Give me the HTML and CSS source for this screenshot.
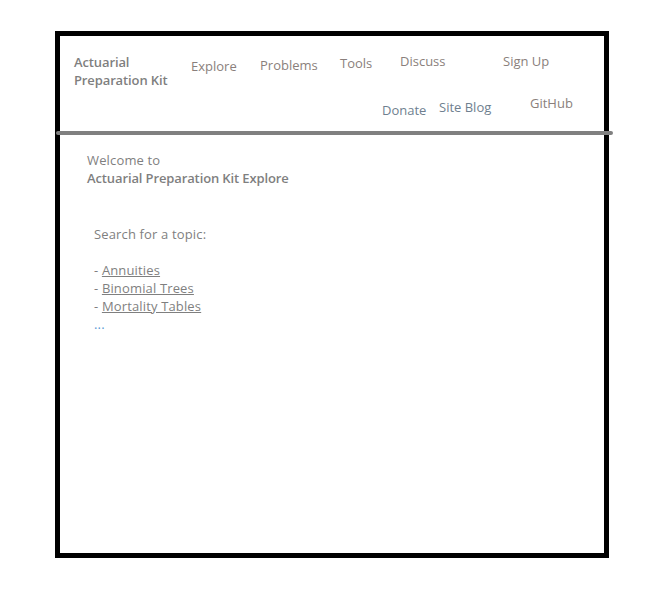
FILE: index.html
```html
<!DOCTYPE html>
<html>
<head>
<meta charset="utf-8">
<title>Actuarial Preparation Kit Explore</title>
<link rel="stylesheet" href="styles.css">
</head>
<body>
<div class="frame">
  <header class="header">
    <div class="row row-top">
      <div class="brand">Actuarial<br>Preparation Kit</div>
      <a class="nav nav-explore">Explore</a>
      <a class="nav nav-problems">Problems</a>
      <a class="nav nav-tools">Tools</a>
      <a class="nav nav-discuss">Discuss</a>
      <a class="nav nav-signup">Sign Up</a>
    </div>
    <div class="row row-bottom">
      <a class="nav nav-donate">Donate</a>
      <a class="nav nav-blog">Site Blog</a>
      <a class="nav nav-github">GitHub</a>
    </div>
  </header>
  <div class="rule"></div>
  <main class="content">
    <p class="welcome">Welcome to<br><strong>Actuarial Preparation Kit Explore</strong></p>
    <div class="search">
      <p class="search-label">Search for a topic:</p>
      <ul class="topics">
        <li>- <a class="topic">Annuities</a></li>
        <li>- <a class="topic">Binomial Trees</a></li>
        <li>- <a class="topic">Mortality Tables</a></li>
        <li class="more">...</li>
      </ul>
    </div>
  </main>
</div>
</body>
</html>
```
FILE: styles.css
```css
html, body {
  margin: 0;
  padding: 0;
  background: #ffffff;
}
body {
  font-family: "Open Sans", "Noto Sans", sans-serif;
  font-size: 13px;
  line-height: 18px;
  color: #7f7f7f;
}
.frame {
  box-sizing: border-box;
  margin: 31px 0 0 55px;
  width: 554px;
  height: 527px;
  border: 5px solid #000000;
  display: flex;
  flex-direction: column;
}
.header {
  height: 95px;
  padding-left: 14px;
  display: flex;
  flex-direction: column;
}
.row {
  display: flex;
  align-items: flex-start;
}
.brand {
  width: 117px;
  margin-top: 17px;
  font-weight: 600;
  letter-spacing: -0.12px;
  color: #7f7f7f;
  flex: none;
}
.nav {
  flex: none;
  white-space: nowrap;
  color: #8a7f7c;
}
.nav-explore { width: 69px; margin-top: 21px; }
.nav-problems { width: 80px; margin-top: 20px; }
.nav-tools { width: 60px; margin-top: 18px; }
.nav-discuss { width: 103px; margin-top: 16px; }
.nav-signup { margin-top: 16px; }
.row-bottom {
  padding-left: 308px;
}
.nav-donate { width: 57px; margin-top: 12px; color: #6f7f8f; }
.nav-blog { width: 91px; margin-top: 9px; color: #6f7f8f; }
.nav-github { margin-top: 5px; }
.rule {
  height: 4px;
  margin: 0 -9px 0 -4px;
  background: #808080;
  border-radius: 2px;
}
.content {
  padding: 16px 0 0 27px;
  letter-spacing: 0.15px;
}
.welcome {
  margin: 0;
}
.welcome strong {
  font-weight: 600;
  letter-spacing: -0.12px;
}
.search {
  margin: 38px 0 0 7px;
}
.search-label {
  margin: 0 0 18px 0;
}
.topics {
  list-style: none;
  margin: 0;
  padding: 0;
}
.topic {
  color: #7f7f7f;
  text-decoration: underline;
}
.more {
  color: #5b9bd5;
}
```
